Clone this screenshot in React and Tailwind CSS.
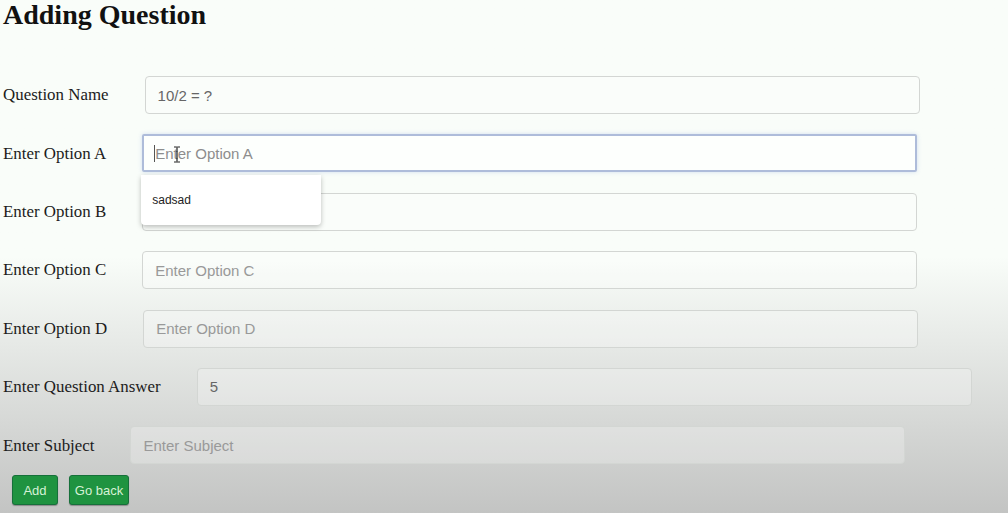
import React from "react";

const fields = [
  { label: "Question Name", value: "10/2 = ?", placeholder: "" },
  { label: "Enter Option A", value: "", placeholder: "Enter Option A", focused: true },
  { label: "Enter Option B", value: "", placeholder: "Enter Option B" },
  { label: "Enter Option C", value: "", placeholder: "Enter Option C" },
  { label: "Enter Option D", value: "", placeholder: "Enter Option D" },
  { label: "Enter Question Answer", value: "5", placeholder: "Enter Answer" },
  { label: "Enter Subject", value: "", placeholder: "Enter Subject" },
];

const FieldRow = ({ label, value, placeholder, focused }) => {
  return (
    <div className="flex items-center">
      <label className="text-[16.9px] text-[#1c1c1c] pl-[3px] whitespace-nowrap">
        {label}
      </label>

      <div className="relative ml-[36px]">
        <input
          readOnly
          defaultValue={value}
          placeholder={placeholder}
          className={
            focused
              ? "w-[775px] h-[38px] px-[11px] rounded-[2px] border-2 border-[#aebcda] bg-white/70 text-[15px] text-[#555] placeholder:text-[#8d8d8d] outline-none shadow-[0_0_4px_rgba(120,150,220,0.3)] font-['Liberation_Sans',Arial,sans-serif]"
              : "w-[775px] h-[38px] px-[12px] rounded-[4px] border border-[#d3d6d3] bg-white/25 text-[15px] text-[#666] placeholder:text-[#999] outline-none font-['Liberation_Sans',Arial,sans-serif]"
          }
        />

        {focused && (
          <>
            {/* text caret */}
            <span className="absolute left-[12px] top-[11px] w-px h-[17px] bg-[#555]" />
            {/* mouse I-beam */}
            <svg
              className="absolute left-[31px] top-[12px]"
              width="8"
              height="17"
              viewBox="0 0 8 17"
            >
              <path
                d="M1 1h2.2c.4 0 .8.3.8.8 0-.5.4-.8.8-.8H7M1 16h2.2c.4 0 .8-.3.8-.8 0 .5.4.8.8.8H7M4 2v13"
                stroke="#222"
                strokeWidth="1.2"
                fill="none"
              />
            </svg>

            {/* autocomplete suggestion */}
            <div className="absolute left-[-1px] top-[41px] w-[180px] h-[50px] z-10 bg-white rounded-b-[4px] shadow-[0_2px_5px_rgba(0,0,0,0.25)] flex items-center pl-[11px] text-[12px] text-[#222] font-['Liberation_Sans',Arial,sans-serif]">
              sadsad
            </div>
          </>
        )}
      </div>
    </div>
  );
};

export default function App() {
  return (
    <div className="h-[513px] overflow-hidden bg-linear-to-b from-[#f9fdf9] from-50% to-[#c3c4c3] font-['Liberation_Serif','Times_New_Roman',serif]">
      <h1 className="text-[28px] leading-[30px] font-bold text-[#111] pl-[3px] pt-0">
        Adding Question
      </h1>

      {/* Form */}
      <div className="flex flex-col gap-[20.4px] mt-[46px]">
        {fields.map((f) => (
          <FieldRow key={f.label} {...f} />
        ))}
      </div>

      <div className="flex gap-[11px] ml-[12px] mt-[11px]">
        <button className="h-[30px] w-[46px] rounded-[3px] bg-[#1f9340] border border-[#16703a] text-[13px] text-[#d6f1d6] font-['Liberation_Sans',Arial,sans-serif] shadow-[0_1px_1px_rgba(0,0,0,0.3)]">
          Add
        </button>
        <button className="h-[30px] w-[60px] rounded-[3px] bg-[#1f9340] border border-[#16703a] text-[13px] text-[#d6f1d6] font-['Liberation_Sans',Arial,sans-serif] shadow-[0_1px_1px_rgba(0,0,0,0.3)]">
          Go back
        </button>
      </div>
    </div>
  );
}
